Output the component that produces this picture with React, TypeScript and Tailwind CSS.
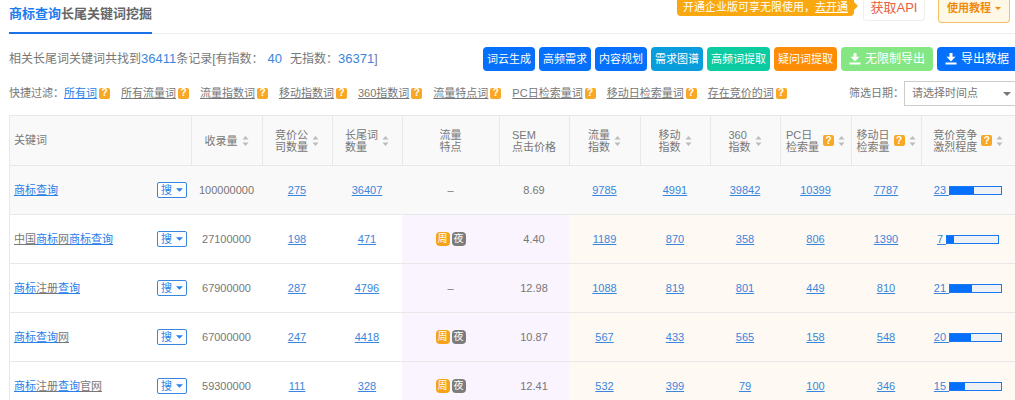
// src/App.tsx
import type { ReactNode } from "react";

const filters = [
  "所有词",
  "所有流量词",
  "流量指数词",
  "移动指数词",
  "360指数词",
  "流量特点词",
  "PC日检索量词",
  "移动日检索量词",
  "存在竞价的词",
];

const tools = [
  { label: "词云生成", color: "bg-[#0470fb]" },
  { label: "高频需求", color: "bg-[#0470fb]" },
  { label: "内容规划", color: "bg-[#0470fb]" },
  { label: "需求图谱", color: "bg-[#0a9ddb]" },
  { label: "高频词提取", color: "bg-[#0bcca0]" },
  { label: "疑问词提取", color: "bg-[#ff8c05]" },
];

const columns = [
  { lines: ["收录量"], width: "w-[71px]", sort: true, help: false },
  { lines: ["竞价公", "司数量"], width: "w-[70px]", sort: true, help: false },
  { lines: ["长尾词", "数量"], width: "w-[70px]", sort: true, help: false },
  { lines: ["流量", "特点"], width: "w-[97px]", sort: false, help: false },
  { lines: ["SEM", "点击价格"], width: "w-[70px]", sort: false, help: false },
  { lines: ["流量", "指数"], width: "w-[71px]", sort: true, help: false },
  { lines: ["移动", "指数"], width: "w-[70px]", sort: true, help: false },
  { lines: ["360", "指数"], width: "w-[70px]", sort: true, help: false },
  { lines: ["PC日", "检索量"], width: "w-[71px]", sort: true, help: true },
  { lines: ["移动日", "检索量"], width: "w-[70px]", sort: true, help: true },
  { lines: ["竞价竞争", "激烈程度"], width: "w-[94px]", sort: true, help: true },
];

// Los fragmentos entre * se resaltan en azul
const rows = [
  {
    keyword: "*商标查询*",
    total: "100000000",
    links: ["275", "36407"],
    tags: false,
    price: "8.69",
    stats: ["9785", "4991", "39842", "10399", "7787"],
    level: 23,
  },
  {
    keyword: "中国*商标*网*商标查询*",
    total: "27100000",
    links: ["198", "471"],
    tags: true,
    price: "4.40",
    stats: ["1189", "870", "358", "806", "1390"],
    level: 7,
  },
  {
    keyword: "*商标*注册*查询*",
    total: "67900000",
    links: ["287", "4796"],
    tags: false,
    price: "12.98",
    stats: ["1088", "819", "801", "449", "810"],
    level: 21,
  },
  {
    keyword: "*商标查询*网",
    total: "67000000",
    links: ["247", "4418"],
    tags: true,
    price: "10.87",
    stats: ["567", "433", "565", "158", "548"],
    level: 20,
  },
  {
    keyword: "*商标*注册*查询*官网",
    total: "59300000",
    links: ["111", "328"],
    tags: true,
    price: "12.41",
    stats: ["532", "399", "79", "100", "346"],
    level: 15,
  },
];

function Help() {
  return (
    <span className="inline-flex h-[11px] w-[11px] shrink-0 items-center justify-center rounded-xs bg-[#f9a825] text-[10px] leading-none font-bold text-white">
      ?
    </span>
  );
}

function Caret({ className }: { className: string }) {
  return (
    <svg viewBox="0 0 8 4" className={className} fill="currentColor" aria-hidden="true">
      <path d="M0 0h8L4 4z" />
    </svg>
  );
}

function SortIcon() {
  return (
    <svg viewBox="0 0 7 10" className="h-[10px] w-[7px] shrink-0 fill-[#bbb]" aria-hidden="true">
      <path d="M3.5 0L6.5 3.5h-6zM3.5 10L.5 6.5h6z" />
    </svg>
  );
}

function DownloadIcon() {
  return (
    <svg viewBox="0 0 12 12" className="h-3 w-3 shrink-0" fill="currentColor" aria-hidden="true">
      <path d="M4.5 0h3v3.8h3L6 8.4 1.5 3.8h3zM.5 9.5h11v2H.5z" />
    </svg>
  );
}

function NumberLink({ children }: { children: ReactNode }) {
  return (
    <a href="#" className="text-[#3a86dc] underline">
      {children}
    </a>
  );
}

export default function App() {
  return (
    <div className="h-screen overflow-hidden bg-white pl-[9px] font-['Liberation_Sans','Noto_Sans_CJK_SC',sans-serif] text-[11px] text-[#777]">
      {/* Encabezado */}
      <header className="flex items-start border-b border-[#eee]">
        <h1 className="-mb-px h-[34px] border-b-2 border-[#1b72e8] pt-1 text-[13px] leading-5 font-bold text-[#666]">
          <span className="text-[#1b7cf2]">商标查询</span>长尾关键词挖掘
        </h1>
        <div className="ml-auto flex items-start pr-[5px]">
          <p className="h-4 rounded-b-sm bg-[#f9a80f] px-[6px] leading-[14px] text-white">
            开通企业版可享无限使用，
            <a href="#" className="underline">
              去开通
            </a>
          </p>
          <svg viewBox="0 0 4 8" className="mt-[2px] mr-[5px] h-2 w-1 fill-[#f9a80f]" aria-hidden="true">
            <path d="M0 0l4 4-4 4z" />
          </svg>
          <button className="h-[21px] w-[62px] rounded-b-sm border border-t-0 border-[#eee] pb-[5px] text-[13px] leading-4 text-[#e8603c]">
            获取API
          </button>
          <button className="ml-[13px] flex h-[23px] w-[72px] items-center justify-center gap-1 rounded-b-sm border border-t-0 border-[#f3c064] bg-[#fff8e6] pb-[5px] font-bold text-[#f08c0a]">
            使用教程
            <Caret className="h-[3px] w-[6px]" />
          </button>
        </div>
      </header>

      {/* Resumen y herramientas */}
      <div className="mt-[13px] flex items-center justify-between">
        <p className="text-xs whitespace-nowrap">
          相关长尾词关键词共找到<span className="text-[13px] text-[#3a86dc]">36411</span>条记录[有指数：
          <span className="mr-2 ml-1 text-[13px] text-[#3a86dc]">40</span>无指数：
          <span className="text-[13px] text-[#3a86dc]">36371</span>]
        </p>
        <div className="flex gap-1">
          {tools.map((tool) => (
            <button key={tool.label} className={`h-6 rounded-sm px-1 whitespace-nowrap text-white ${tool.color}`}>
              {tool.label}
            </button>
          ))}
          <button className="flex h-6 items-center gap-1 rounded-sm bg-[#84e784] px-2 text-xs whitespace-nowrap text-white">
            <DownloadIcon />
            无限制导出
          </button>
          <button className="flex h-6 items-center gap-1 rounded-l-sm bg-[#0470fb] pr-[6px] pl-2 text-xs whitespace-nowrap text-white">
            <DownloadIcon />
            导出数据
          </button>
        </div>
      </div>

      {/* Filtros rápidos */}
      <div className="mt-[10px] flex h-6 items-center whitespace-nowrap">
        <span>快捷过滤：</span>
        <ul className="flex gap-[11px]">
          {filters.map((name, i) => (
            <li key={name} className="flex items-center gap-[2px]">
              <a href="#" className={i === 0 ? "text-[#2a80e8] underline" : "underline"}>
                {name}
              </a>
              <Help />
            </li>
          ))}
        </ul>
        <label htmlFor="date" className="ml-auto">
          筛选日期：
        </label>
        <div className="relative">
          <select id="date" className="h-[25px] w-[111px] appearance-none border border-r-0 border-[#ccc] bg-white pl-[7px]">
            <option>请选择时间点</option>
          </select>
          <Caret className="pointer-events-none absolute top-[11px] right-1 h-1 w-2" />
        </div>
      </div>

      {/* Tabla de palabras clave */}
      <table className="mt-[10px] w-full table-fixed border-collapse border-l border-[#e8e8e8] text-center">
        <thead>
          <tr className="h-[50px] border-y border-[#e8e8e8] bg-[#f9f9f9]">
            <th className="pl-1 text-left font-normal">关键词</th>
            {columns.map((col) => (
              <th key={col.lines.join("")} className={`border-l border-[#e8e8e8] p-0 font-normal ${col.width}`}>
                <div className="flex items-center justify-center gap-1 text-left leading-3 whitespace-nowrap">
                  <span>
                    {col.lines.map((line) => (
                      <span key={line} className="block">
                        {line}
                      </span>
                    ))}
                  </span>
                  {col.help && <Help />}
                  {col.sort && <SortIcon />}
                </div>
              </th>
            ))}
          </tr>
        </thead>
        <tbody>
          {rows.map((row, i) => {
            const purple = i === 0 ? "" : "bg-[#faf4fe]";
            const cream = i === 0 ? "" : "bg-[#fef9f2]";
            return (
              <tr key={row.keyword} className={`h-[49px] border-b border-[#e8e8e8] ${i === 0 ? "bg-[#f9f9f9]" : ""}`}>
                <td className="pr-1 pl-1">
                  <div className="flex items-center justify-between">
                    <a href="#">
                      {row.keyword.split("*").map((part, n) => (
                        <span key={n} className={n % 2 ? "text-[#2a80e8] underline" : "underline"}>
                          {part}
                        </span>
                      ))}
                    </a>
                    <button className="flex h-4 w-[30px] items-center justify-center gap-1 rounded-xs border border-[#3a86dc] bg-white text-[#2a80e8]">
                      搜
                      <Caret className="h-1 w-[7px]" />
                    </button>
                  </div>
                </td>
                <td>{row.total}</td>
                {row.links.map((value) => (
                  <td key={value}>
                    <NumberLink>{value}</NumberLink>
                  </td>
                ))}
                <td className={purple}>
                  {row.tags ? (
                    <div className="flex justify-center gap-[2px] leading-[14px] text-white">
                      <span className="w-[14px] rounded-sm bg-[#f5a31a] text-[10px]">周</span>
                      <span className="w-[14px] rounded-sm bg-[#7c7c7c] text-[10px]">夜</span>
                    </div>
                  ) : (
                    "–"
                  )}
                </td>
                <td className={purple}>{row.price}</td>
                {row.stats.map((value) => (
                  <td key={value} className={cream}>
                    <NumberLink>{value}</NumberLink>
                  </td>
                ))}
                <td className={cream}>
                  <a href="#" className="flex items-center justify-center text-[#3a86dc]">
                    <span className="whitespace-pre underline">{row.level + " "}</span>
                    <span className="h-[9px] w-[53px] border border-[#1b78f0] bg-[#eef2f5]">
                      <span className="block h-full bg-[#0470fb]" style={{ width: `${row.level * 2}%` }} />
                    </span>
                  </a>
                </td>
              </tr>
            );
          })}
        </tbody>
      </table>
    </div>
  );
}
